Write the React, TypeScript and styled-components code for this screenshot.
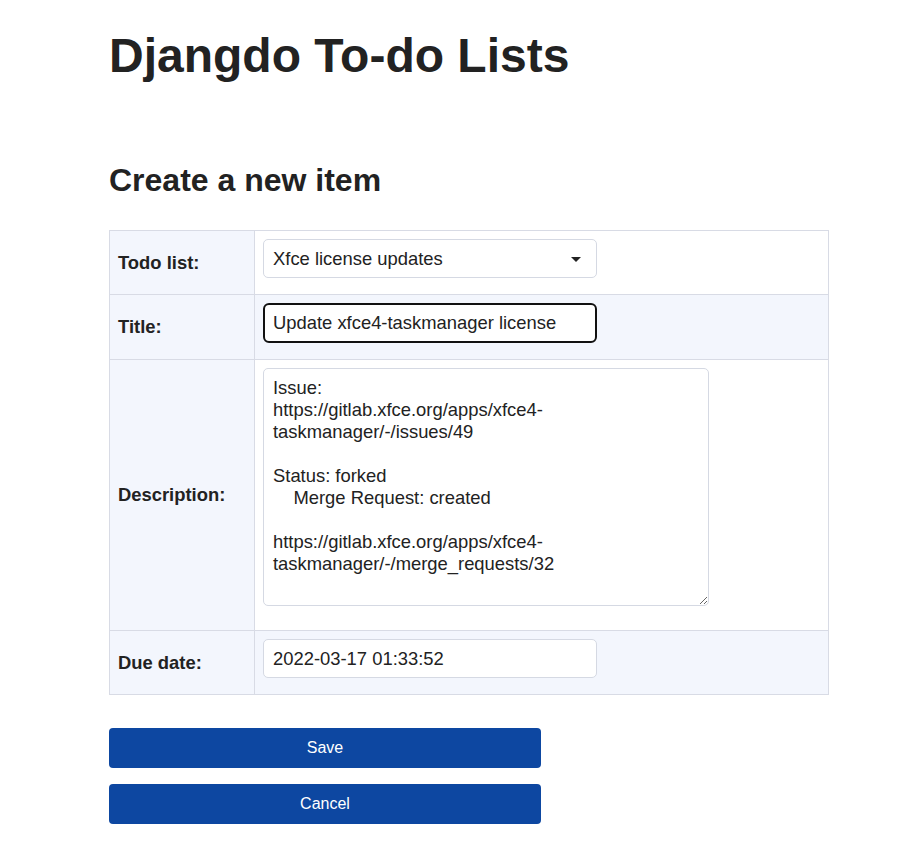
import React from 'react';
import styled, { createGlobalStyle } from 'styled-components';

const GlobalStyle = createGlobalStyle`
    body {
        margin: 0;
        background: #fff;
        color: #222;
        font-family: 'Liberation Sans', Arial, sans-serif;
    }
`;

const Page = styled.main`
    padding: 28px 68px 30px 109px;
`;

const PageTitle = styled.h1`
    font-size: 48px;
    font-weight: 700;
    line-height: 55px;
    margin: 0;
`;

const SectionTitle = styled.h2`
    font-size: 32px;
    font-weight: 700;
    line-height: 37px;
    margin: 79px 0 31px;
`;

const FormTable = styled.table`
    border-collapse: collapse;
    width: 720px;
`;

const Row = styled.tr`
    &:nth-child(even) td {
        background: #f3f6fd;
    }
`;

const LabelCell = styled.th`
    background: #f3f6fd;
    border: 1px solid #d8dbe5;
    font-size: 18.4px;
    font-weight: 700;
    padding: 0 8px;
    text-align: left;
    vertical-align: middle;
    width: 128px;
`;

const ValueCell = styled.td`
    background: #fff;
    border: 1px solid #d8dbe5;
    padding: 8px;
    vertical-align: top;
`;

const controlBase = `
    background: #fff;
    border: 1px solid #d5d9e3;
    border-radius: 5px;
    box-sizing: border-box;
    color: #222;
    display: block;
    font-family: 'Liberation Sans', Arial, sans-serif;
    font-size: 18.4px;
    margin: 0 0 8px;
    outline: none;
`;

const SelectWrap = styled.div`
    position: relative;
    width: 334px;
`;

const Select = styled.select`
    ${controlBase}
    appearance: none;
    height: 39px;
    line-height: 21px;
    padding: 0 30px 0 9px;
    width: 100%;
`;

const Caret = styled.svg`
    pointer-events: none;
    position: absolute;
    right: 16px;
    top: 18px;
`;

const TextInput = styled.input<{ $focused?: boolean }>`
    ${controlBase}
    height: ${props => (props.$focused ? '40px' : '39px')};
    line-height: 21px;
    padding: 0 ${props => (props.$focused ? '8px' : '9px')};
    width: 334px;
    border: ${props => (props.$focused ? '2px solid #111' : '1px solid #d5d9e3')};
    border-radius: ${props => (props.$focused ? '6px' : '5px')};
`;

const TextArea = styled.textarea`
    ${controlBase}
    height: 238px;
    line-height: 22px;
    margin-bottom: 16px;
    padding: 8px 9px;
    resize: both;
    width: 446px;
`;

const Actions = styled.div`
    display: flex;
    flex-direction: column;
    gap: 16px;
    margin-top: 33px;
    width: 432px;
`;

const Button = styled.button`
    background: #0d47a1;
    border: none;
    border-radius: 4px;
    color: #fff;
    cursor: pointer;
    font-family: 'Liberation Sans', Arial, sans-serif;
    font-size: 16px;
    height: 40px;
    width: 100%;
`;

const description = `Issue:
https://gitlab.xfce.org/apps/xfce4-taskmanager/-/issues/49

Status: forked
    Merge Request: created

https://gitlab.xfce.org/apps/xfce4-taskmanager/-/merge_requests/32`;

const App = () => {
    return (
        <>
            <GlobalStyle />
            <Page>
                <PageTitle>Djangdo To-do Lists</PageTitle>
                <SectionTitle>Create a new item</SectionTitle>
                <form onSubmit={e => e.preventDefault()}>
                    <FormTable>
                        <tbody>
                            <Row>
                                <LabelCell>Todo list:</LabelCell>
                                <ValueCell>
                                    <SelectWrap>
                                        <Select defaultValue="xfce">
                                            <option value="xfce">Xfce license updates</option>
                                        </Select>
                                        <Caret width="10" height="5" viewBox="0 0 10 5">
                                            <path d="M0 0H10L5 5Z" fill="#222" />
                                        </Caret>
                                    </SelectWrap>
                                </ValueCell>
                            </Row>
                            <Row>
                                <LabelCell>Title:</LabelCell>
                                <ValueCell>
                                    <TextInput $focused defaultValue="Update xfce4-taskmanager license" />
                                </ValueCell>
                            </Row>
                            <Row>
                                <LabelCell>Description:</LabelCell>
                                <ValueCell>
                                    <TextArea defaultValue={description} />
                                </ValueCell>
                            </Row>
                            <Row>
                                <LabelCell>Due date:</LabelCell>
                                <ValueCell>
                                    <TextInput defaultValue="2022-03-17 01:33:52" />
                                </ValueCell>
                            </Row>
                        </tbody>
                    </FormTable>
                    <Actions>
                        <Button type="submit">Save</Button>
                        <Button type="button">Cancel</Button>
                    </Actions>
                </form>
            </Page>
        </>
    );
};

export default App;
